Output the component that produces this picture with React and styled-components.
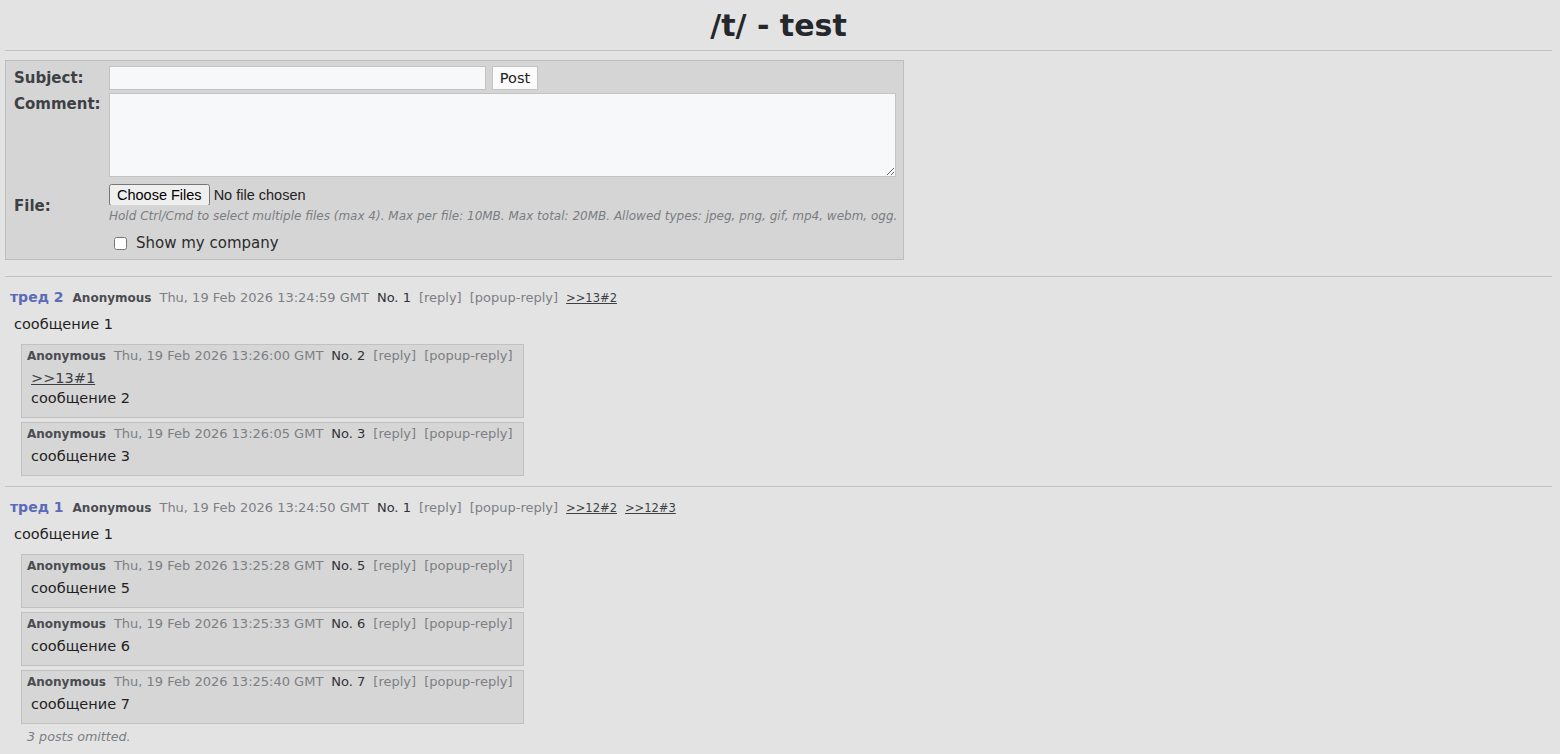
import React from 'react';
import styled, { createGlobalStyle } from 'styled-components';

const GlobalStyle = createGlobalStyle`
    html, body {
        margin: 0;
        padding: 0;
        background: #e3e3e3;
    }
    body {
        font-family: "DejaVu Sans", Verdana, sans-serif;
        color: #2b2b2b;
    }
`;

const Page = styled.div`
    padding: 0 8px 0 5px;
`;

const BoardTitle = styled.h1`
    margin: 0;
    height: 50px;
    box-sizing: border-box;
    padding-top: 1px;
    display: flex;
    align-items: center;
    justify-content: center;
    font-size: 30px;
    font-weight: bold;
    color: #24272b;
`;

const Rule = styled.hr`
    margin: ${props => props.$m || '0'};
    border: 0;
    border-top: 1px solid #c2c2c2;
    height: 0;
`;

const PostForm = styled.form`
    width: 899px;
    box-sizing: border-box;
    margin-top: 9px;
    background: #d5d5d5;
    border: 1px solid #bdbdbd;
    padding: 5px 8px 7px 8px;
    display: grid;
    grid-template-columns: 95px auto;
    row-gap: 3px;
`;

const Label = styled.label`
    font-size: 15px;
    line-height: 18px;
    font-weight: bold;
    color: #3d4146;
    align-self: ${props => props.$align || 'start'};
    padding-top: ${props => props.$pt || '0'};
`;

const Field = styled.div`
    display: flex;
    flex-direction: ${props => props.$column ? 'column' : 'row'};
    align-items: ${props => props.$column ? 'flex-start' : 'center'};
    gap: ${props => props.$gap || '6px'};
    padding-top: ${props => props.$pt || '0'};
    min-width: 0;
`;

const TextInput = styled.input`
    width: 377px;
    height: 24px;
    box-sizing: border-box;
    border: 1px solid #c3c3c3;
    background: #f7f8fa;
    margin: 0;
    padding: 2px 4px;
    font-family: "DejaVu Sans", Verdana, sans-serif;
    font-size: 13px;
`;

const PostButton = styled.button`
    height: 24px;
    width: 46px;
    padding: 0;
    border: 1px solid #c3c3c3;
    background: #fbfbfb;
    font-family: "DejaVu Sans", Verdana, sans-serif;
    font-size: 14.5px;
    color: #222;
`;

const Comment = styled.textarea`
    width: 787px;
    height: 84px;
    box-sizing: border-box;
    border: 1px solid #c3c3c3;
    background: #f7f8fa;
    margin: 0;
    display: block;
`;

const FileInput = styled.input`
    font-family: "Liberation Sans", Arial, sans-serif;
    font-size: 14.5px;
    color: #222;
    margin: 0;
    height: 21px;
`;

const Hint = styled.div`
    font-size: 12px;
    line-height: 15px;
    font-style: italic;
    color: #7a7d82;
    white-space: nowrap;
`;

const CheckRow = styled.label`
    grid-column: 2;
    display: flex;
    align-items: center;
    gap: 9px;
    font-size: 15px;
    line-height: 18px;
    color: #2b2b2b;
    padding: 7px 0 0 5px;

    input {
        margin: 0;
        width: 13px;
        height: 13px;
    }
`;

const Thread = styled.section`
    padding: 11px 0 0 5px;
`;

const Header = styled.div`
    display: flex;
    align-items: baseline;
    gap: 8px;
    font-size: 13px;
    line-height: ${props => props.$lh || '16px'};
    white-space: nowrap;
`;

const ThreadName = styled.span`
    font-size: 14px;
    font-weight: bold;
    color: #5b6bb8;
    margin-right: 1px;
`;

const Author = styled.span`
    font-size: 12px;
    font-weight: bold;
    color: #4a4d52;
`;

const Date = styled.span`
    color: #7c7f84;
`;

const PostNo = styled.span`
    color: #2f3236;
`;

const Action = styled.span`
    color: #7c7f84;
`;

const RefLink = styled.a`
    font-size: 11.5px;
    color: #3c3f44;
    text-decoration: underline;
`;

const Message = styled.div`
    font-size: 14.5px;
    color: #1f1f1f;
    padding: ${props => props.$p || '0'};
    line-height: 20px;
`;

const QuoteLink = styled.a`
    display: block;
    font-size: 14.5px;
    color: #3c3f44;
    text-decoration: underline;
    line-height: 20px;
    margin: 4px 0 0 4px;
`;

const Replies = styled.div`
    display: flex;
    flex-direction: column;
    align-items: flex-start;
    gap: 4px;
    margin: 10px 0 0 11px;
`;

const Reply = styled.div`
    background: #d6d6d6;
    border: 1px solid #c1c1c1;
    padding: 3px 10px 9px 5px;
    width: 486px;
`;

const Omitted = styled.div`
    font-size: 12.7px;
    line-height: 16px;
    font-style: italic;
    color: #7c7f84;
    margin: 5px 0 0 17px;
`;

const threads = [
    {
        name: 'тред 2',
        date: 'Thu, 19 Feb 2026 13:24:59 GMT',
        refs: ['>>13#2'],
        replies: [
            { date: 'Thu, 19 Feb 2026 13:26:00 GMT', no: 2, quote: '>>13#1', text: 'сообщение 2' },
            { date: 'Thu, 19 Feb 2026 13:26:05 GMT', no: 3, text: 'сообщение 3' },
        ],
    },
    {
        name: 'тред 1',
        date: 'Thu, 19 Feb 2026 13:24:50 GMT',
        refs: ['>>12#2', '>>12#3'],
        replies: [
            { date: 'Thu, 19 Feb 2026 13:25:28 GMT', no: 5, text: 'сообщение 5' },
            { date: 'Thu, 19 Feb 2026 13:25:33 GMT', no: 6, text: 'сообщение 6' },
            { date: 'Thu, 19 Feb 2026 13:25:40 GMT', no: 7, text: 'сообщение 7' },
        ],
        omitted: 3,
    },
];

function App() {
    return (
        <Page>
            <GlobalStyle />
            <BoardTitle>/t/ - test</BoardTitle>
            <Rule />

            <PostForm onSubmit={e => e.preventDefault()}>
                <Label $align="center">Subject:</Label>
                <Field>
                    <TextInput type="text" />
                    <PostButton type="submit">Post</PostButton>
                </Field>

                <Label $pt="2px">Comment:</Label>
                <Comment />

                <Label $align="center" $pt="8px">File:</Label>
                <Field $column $gap="4px" $pt="4px">
                    <FileInput type="file" multiple />
                    <Hint>Hold Ctrl/Cmd to select multiple files (max 4). Max per file: 10MB. Max total: 20MB. Allowed types: jpeg, png, gif, mp4, webm, ogg.</Hint>
                </Field>

                <CheckRow>
                    <input type="checkbox" />
                    Show my company
                </CheckRow>
            </PostForm>

            <Rule $m="16px 0 0 0" />

            {threads.map(t => (
                <React.Fragment key={t.name}>
                    <Thread>
                        <Header $lh="18px">
                            <ThreadName>{t.name}</ThreadName>
                            <Author>Anonymous</Author>
                            <Date>{t.date}</Date>
                            <PostNo>No. 1</PostNo>
                            <Action>[reply]</Action>
                            <Action>[popup-reply]</Action>
                            {t.refs.map(r => <RefLink key={r} href="#">{r}</RefLink>)}
                        </Header>
                        <Message $p="7px 0 0 4px">сообщение 1</Message>

                        <Replies>
                            {t.replies.map(r => (
                                <Reply key={r.no}>
                                    <Header>
                                        <Author>Anonymous</Author>
                                        <Date>{r.date}</Date>
                                        <PostNo>No. {r.no}</PostNo>
                                        <Action>[reply]</Action>
                                        <Action>[popup-reply]</Action>
                                    </Header>
                                    {r.quote && <QuoteLink href="#">{r.quote}</QuoteLink>}
                                    <Message $p={r.quote ? '0 0 0 4px' : '4px 0 0 4px'}>{r.text}</Message>
                                </Reply>
                            ))}
                        </Replies>
                        {t.omitted && <Omitted>{t.omitted} posts omitted.</Omitted>}
                    </Thread>
                    <Rule $m={t.omitted ? '9px 0 0 0' : '10px 0 0 0'} />
                </React.Fragment>
            ))}
        </Page>
    );
}

export default App;
